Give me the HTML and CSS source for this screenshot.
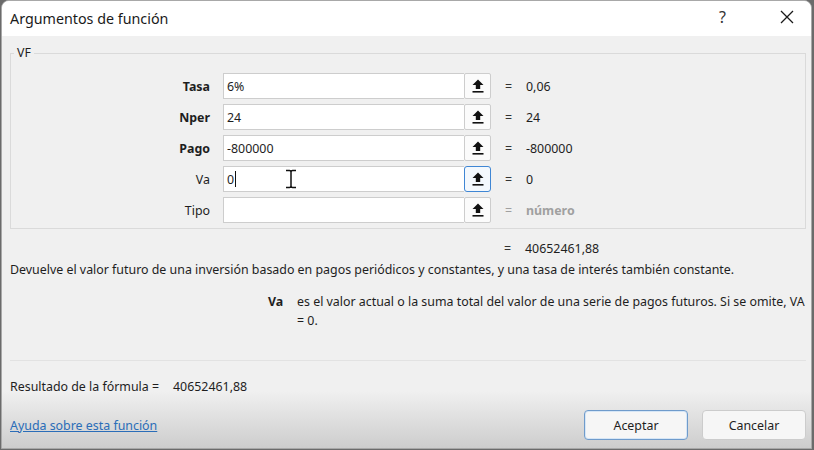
FILE: index.html
```html
<!DOCTYPE html>
<html lang="es">
<head>
<meta charset="utf-8">
<title>Argumentos de función</title>
<link rel="stylesheet" href="styles.css">
</head>
<body>
<div class="window">
  <div class="titlebar">
    <div class="title">Argumentos de función</div>
    <div class="tb-help">?</div>
    <div class="tb-close">
      <svg width="14" height="14" viewBox="0 0 14 14"><path d="M1 1 L13 13 M13 1 L1 13" stroke="#1a1a1a" stroke-width="1.3" fill="none"/></svg>
    </div>
  </div>
  <div class="content">
    <fieldset class="group">
      <legend>VF</legend>
      <div class="row">
        <div class="lbl req">Tasa</div>
        <div class="field"><span class="val">6%</span></div>
        <div class="refbtn"><svg width="12" height="14" viewBox="0 0 12 14"><path d="M6 0.5 L11.5 6 H8.2 V10 H3.8 V6 H0.5 Z" fill="#111"/><rect x="0.5" y="12" width="11" height="1.6" fill="#111"/></svg></div>
        <div class="eq">=</div>
        <div class="res">0,06</div>
      </div>
      <div class="row">
        <div class="lbl req">Nper</div>
        <div class="field"><span class="val">24</span></div>
        <div class="refbtn"><svg width="12" height="14" viewBox="0 0 12 14"><path d="M6 0.5 L11.5 6 H8.2 V10 H3.8 V6 H0.5 Z" fill="#111"/><rect x="0.5" y="12" width="11" height="1.6" fill="#111"/></svg></div>
        <div class="eq">=</div>
        <div class="res">24</div>
      </div>
      <div class="row">
        <div class="lbl req">Pago</div>
        <div class="field"><span class="val">-800000</span></div>
        <div class="refbtn"><svg width="12" height="14" viewBox="0 0 12 14"><path d="M6 0.5 L11.5 6 H8.2 V10 H3.8 V6 H0.5 Z" fill="#111"/><rect x="0.5" y="12" width="11" height="1.6" fill="#111"/></svg></div>
        <div class="eq">=</div>
        <div class="res">-800000</div>
      </div>
      <div class="row">
        <div class="lbl">Va</div>
        <div class="field active"><span class="val">0</span><span class="caret"></span>
          <svg class="ibeam" width="12" height="20" viewBox="0 0 12 20"><path d="M1 1.5 H4.5 Q6 1.5 6 3 Q6 1.5 7.5 1.5 H11 M6 3 V17 M1 18.5 H4.5 Q6 18.5 6 17 Q6 18.5 7.5 18.5 H11" stroke="#111" stroke-width="1.5" fill="none"/></svg>
        </div>
        <div class="refbtn focus"><svg width="12" height="14" viewBox="0 0 12 14"><path d="M6 0.5 L11.5 6 H8.2 V10 H3.8 V6 H0.5 Z" fill="#111"/><rect x="0.5" y="12" width="11" height="1.6" fill="#111"/></svg></div>
        <div class="eq">=</div>
        <div class="res">0</div>
      </div>
      <div class="row">
        <div class="lbl">Tipo</div>
        <div class="field"><span class="val"></span></div>
        <div class="refbtn"><svg width="12" height="14" viewBox="0 0 12 14"><path d="M6 0.5 L11.5 6 H8.2 V10 H3.8 V6 H0.5 Z" fill="#111"/><rect x="0.5" y="12" width="11" height="1.6" fill="#111"/></svg></div>
        <div class="eq dim">=</div>
        <div class="res dim bold">número</div>
      </div>
    </fieldset>
    <div class="total"><span class="eq">=</span><span class="res">40652461,88</span></div>
    <p class="desc">Devuelve el valor futuro de una inversión basado en pagos periódicos y constantes, y una tasa de interés también constante.</p>
    <div class="argdesc">
      <div class="argname">Va</div>
      <div class="argtext">es el valor actual o la suma total del valor de una serie de pagos futuros. Si se omite, VA = 0.</div>
    </div>
    <div class="sep"></div>
    <div class="formula"><span class="flabel">Resultado de la fórmula =</span><span class="fval">40652461,88</span></div>
    <div class="footer">
      <a class="help" href="#">Ayuda sobre esta función</a>
      <div class="buttons">
        <button class="btn default">Aceptar</button>
        <button class="btn">Cancelar</button>
      </div>
    </div>
  </div>
</div>
</body>
</html>
```

FILE: styles.css
```css
html, body {
  margin: 0;
  padding: 0;
}
body {
  width: 814px;
  height: 450px;
  overflow: hidden;
  background: #6b6b6b;
  font-family: "Noto Sans", "Open Sans", sans-serif;
  font-size: 12.4px;
  color: #1e1e1e;
}
.window {
  box-sizing: border-box;
  width: 811px;
  height: 449px;
  margin-left: 1px;
  border: 1px solid #a8a8a8;
  border-radius: 8px 8px 0 0;
  background: #f0f0f0;
  overflow: hidden;
  display: flex;
  flex-direction: column;
}
.titlebar {
  height: 35px;
  background: #ffffff;
  display: flex;
  align-items: center;
  flex-shrink: 0;
}
.title {
  font-size: 14.3px;
  padding-left: 8px;
  color: #1a1a1a;
  flex: 1;
  margin-top: -1px;
}
.tb-help {
  font-size: 16px;
  color: #333;
  width: 14px;
  margin-right: 47px;
  margin-top: -4px;
}
.tb-close {
  width: 14px;
  height: 14px;
  margin-right: 17px;
  margin-top: -3px;
}
.tb-close svg { display: block; }
.content {
  flex: 1;
  position: relative;
  display: flex;
  flex-direction: column;
  background: linear-gradient(to bottom, #f0f0f0 0, #f0f0f0 355px, #cdcdcd 100%);
}
.group {
  margin: 10px 5px 0 8px;
  padding: 13px 0 5px 0;
  border: 1px solid #dadada;
  border-radius: 0;
  display: flex;
  flex-direction: column;
  gap: 5px;
  min-width: 0;
}
.group legend {
  font-size: 12.4px;
  padding: 0 3px;
  margin-left: 3px;
  color: #1e1e1e;
  line-height: 14px;
}
.row {
  display: flex;
  align-items: center;
  height: 26px;
}
.lbl {
  width: 199px;
  text-align: right;
  margin-right: 13px;
}
.lbl.req { font-weight: 700; }
.field {
  position: relative;
  box-sizing: border-box;
  width: 241px;
  height: 26px;
  background: #fff;
  border: 1px solid #cdcdcd;
  border-right: none;
  display: flex;
  align-items: center;
  padding-left: 3px;
}
.caret {
  display: inline-block;
  width: 1px;
  height: 16px;
  background: #111;
  margin-left: 1px;
}
.ibeam {
  position: absolute;
  left: 61px;
  top: 2px;
}
.refbtn {
  box-sizing: border-box;
  width: 27px;
  height: 26px;
  background: #fbfbfb;
  border: 1px solid #cdcdcd;
  border-radius: 2px;
  display: flex;
  align-items: center;
  justify-content: center;
}
.refbtn svg { display: block; }
.refbtn.focus {
  border: 1px solid #3f86d4;
  background: #f3f8fd;
  border-radius: 3px;
}
.eq {
  width: 21px;
  margin-left: 14px;
  color: #333;
}
.res { color: #1e1e1e; }
.dim { color: #a0a0a0; }
.bold { font-weight: 700; }
.total {
  display: flex;
  padding-left: 502px;
  margin-top: 9px;
  height: 20px;
  align-items: center;
}
.total .eq { margin-left: 0; }
.desc {
  margin: 2px 0 0 8px;
  line-height: 19px;
}
.argdesc {
  display: flex;
  margin-top: 13px;
  padding-left: 266px;
  line-height: 19px;
}
.argname {
  font-weight: 700;
  width: 29px;
  flex-shrink: 0;
}
.argtext { width: 512px; }
.sep {
  height: 1px;
  background: #e2e2e2;
  margin: 30px 5px 0 8px;
}
.formula {
  margin: 15px 0 0 8px;
  display: flex;
  height: 20px;
  align-items: center;
}
.flabel {
  display: inline-block;
  width: 163px;
}
.footer {
  display: flex;
  align-items: center;
  justify-content: space-between;
  margin: 14px 5px 0 8px;
}
.help {
  color: #2a6db8;
  text-decoration: underline;
}
.buttons {
  display: flex;
  gap: 14px;
}
.btn {
  box-sizing: border-box;
  width: 104px;
  height: 30px;
  font-family: "Noto Sans", "Open Sans", sans-serif;
  font-size: 12.4px;
  color: #1e1e1e;
  background: #f6f6f6;
  border: 1px solid #cccccc;
  border-radius: 4px;
}
.btn.default {
  border: 1px solid #6f9bcb;
  box-shadow: inset 0 0 0 1px #d6e6f6;
}
```
